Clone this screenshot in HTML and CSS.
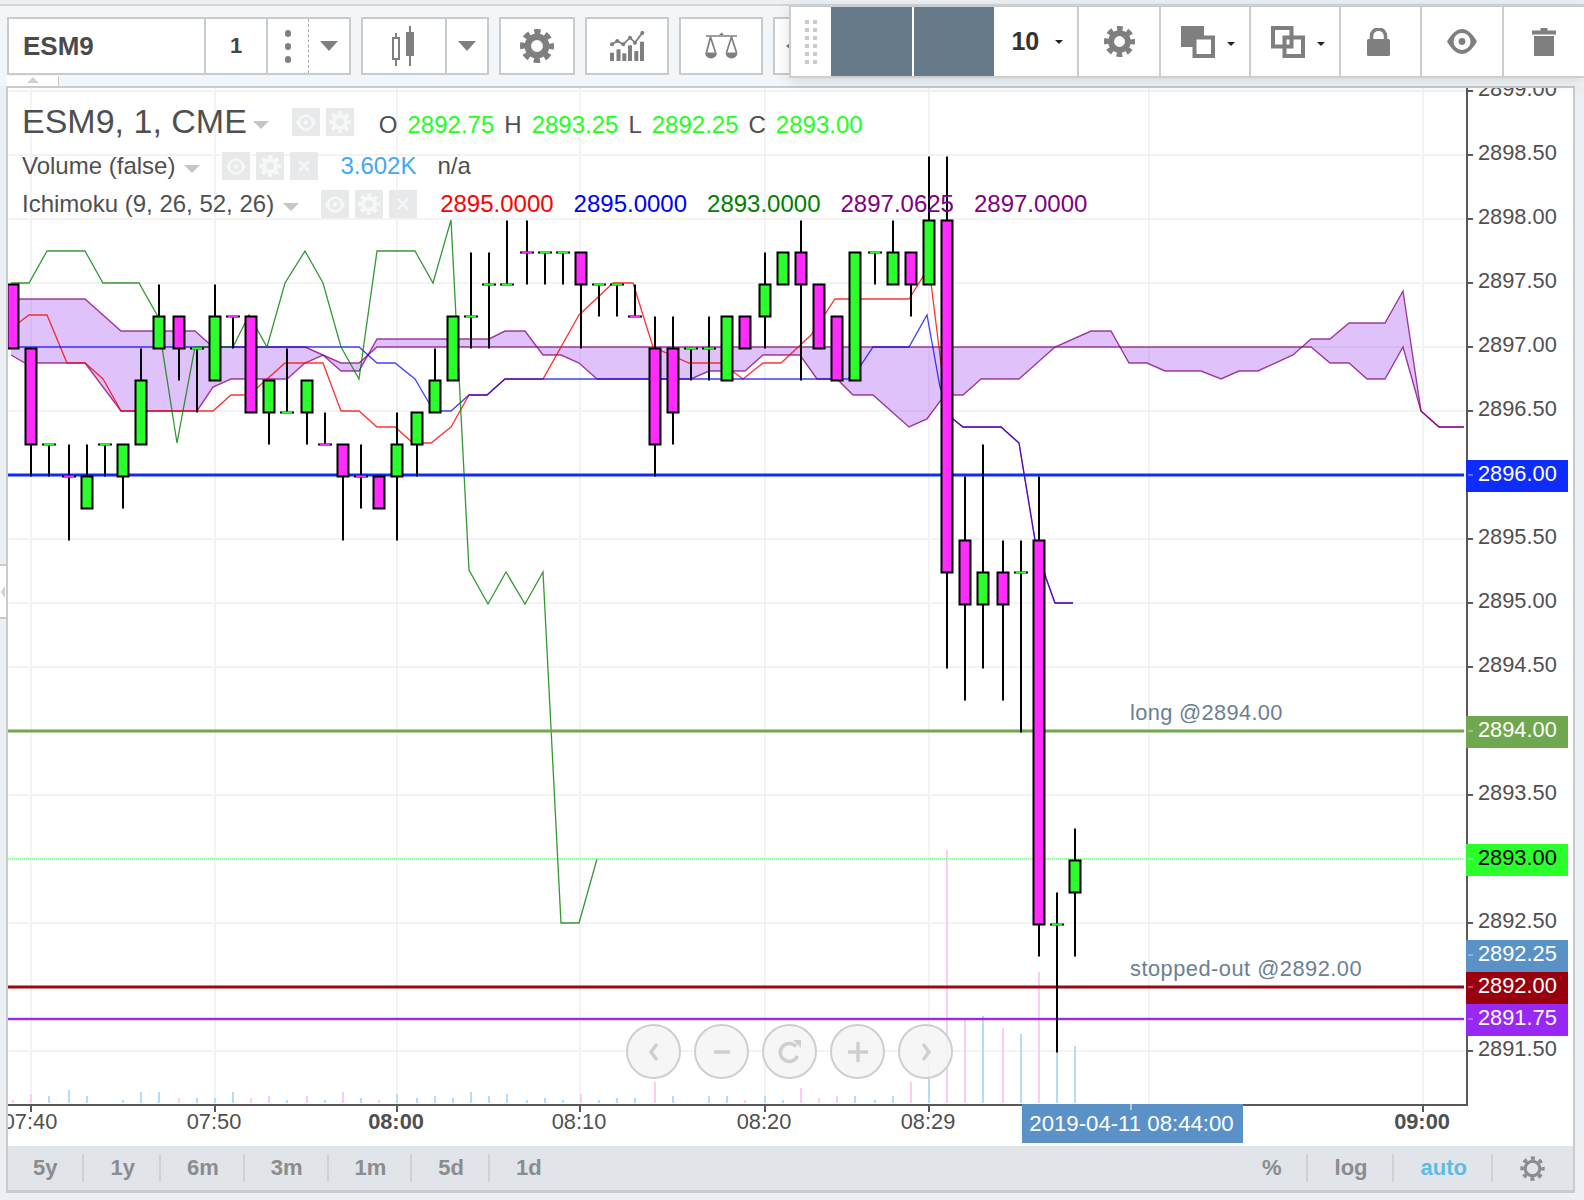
FILE: index.html
```html
<!DOCTYPE html>
<html lang="en">

<head>
    <meta charset="UTF-8" />
    <title>ESM9 chart</title>
    <link rel="stylesheet" href="styles.css">
</head>

<body>
    <!-- shared icons -->
    <svg class="icon-defs" width="0" height="0">
        <symbol id="gear" viewBox="0 0 24 24">
            <circle cx="12" cy="12" r="6.5" fill="none" stroke="currentColor" stroke-width="4.6" />
            <circle cx="12" cy="12" r="10" fill="none" stroke="currentColor" stroke-width="4" stroke-dasharray="4.4 3.45" stroke-dashoffset="2.2" />
        </symbol>
        <symbol id="gear-thin" viewBox="0 0 24 24">
            <circle cx="12" cy="12" r="7" fill="none" stroke="currentColor" stroke-width="3" />
            <circle cx="12" cy="12" r="10" fill="none" stroke="currentColor" stroke-width="3.4" stroke-dasharray="3.93 3.93" stroke-dashoffset="1.96" />
        </symbol>
        <symbol id="eye" viewBox="0 0 30 25">
            <path fill="currentColor" fill-rule="evenodd" d="M0 12.5C5 4 10 0 15 0s10 4 15 12.5C25 21 20 25 15 25S5 21 0 12.5ZM15 4a8.5 8.5 0 1 0 0 17 8.5 8.5 0 0 0 0-17Z" />
            <circle cx="15" cy="12.5" r="3.4" fill="currentColor" />
        </symbol>
        <symbol id="cross" viewBox="0 0 14 14">
            <path d="M2 2l10 10M12 2L2 12" stroke="currentColor" stroke-width="2.4" fill="none" />
        </symbol>
    </svg>

    <div class="topbar">
        <div class="tool-row">
            <div class="tool-group">
                <div class="tool-cell symbol-cell">ESM9</div>
                <div class="tool-cell interval-cell">1</div>
                <div class="tool-cell dots-cell"><i></i><i></i><i></i></div>
                <div class="tool-cell caret-cell"><span class="caret"></span></div>
            </div>
            <div class="tool-group">
                <div class="tool-cell type-cell">
                    <svg width="24" height="40" viewBox="0 0 24 40">
                        <path d="M4 7v33" stroke="#7f7f7f" stroke-width="2" />
                        <rect x="1" y="12" width="6" height="21" fill="#fff" stroke="#7f7f7f" stroke-width="2" />
                        <path d="M18 0v40" stroke="#7f7f7f" stroke-width="2" />
                        <rect x="14" y="6" width="8" height="24" fill="#7f7f7f" />
                    </svg>
                </div>
                <div class="tool-cell caret-cell"><span class="caret"></span></div>
            </div>
            <div class="tool-group gear-group">
                <svg class="tool-gear" width="34" height="34"><use href="#gear" /></svg>
            </div>
            <div class="tool-group icon-group">
                <svg width="35" height="30" viewBox="0 0 35 30">
                    <g fill="#7f7f7f">
                        <rect x="0" y="21.7" width="4" height="8.3" />
                        <rect x="6.5" y="18.3" width="4" height="11.7" />
                        <rect x="12.3" y="22.3" width="4" height="7.7" />
                        <rect x="18" y="14.3" width="4" height="15.7" />
                        <rect x="24.3" y="20" width="4" height="10" />
                        <rect x="30" y="10.7" width="4" height="19.3" />
                        <circle cx="2" cy="13.3" r="2" />
                        <circle cx="7.3" cy="10" r="2" />
                        <circle cx="13.3" cy="13.3" r="2" />
                        <circle cx="20" cy="6.7" r="2" />
                        <circle cx="25" cy="11.7" r="2" />
                        <circle cx="32.3" cy="1.9" r="2" />
                    </g>
                    <path d="M2 13.3L7.3 10l6 3.3L20 6.7l5 5 7.3-9.8" fill="none" stroke="#7f7f7f" stroke-width="1.8" />
                </svg>
            </div>
            <div class="tool-group icon-group">
                <svg width="33" height="28" viewBox="0 0 33 28">
                    <path d="M1 4h31M5.5 5L1.5 20.5M5.5 5l5 15.5M26.5 5l-5 15.5M26.5 5l5 15.5" fill="none" stroke="#7f7f7f" stroke-width="1.7" />
                    <path d="M14 3l2.5-2.5L19 3z" fill="#7f7f7f" />
                    <path d="M0 20.5h12a6 6 0 0 1-12 0ZM20.5 20.5h12a6 6 0 0 1-12 0Z" fill="#7f7f7f" />
                </svg>
            </div>
            <div class="tool-group more-group"><span class="more-arrow"></span></div>
        </div>
        <div class="collapse-tab"><span></span></div>
    </div>

    <div class="side-handle"><span></span></div>

    <div class="draw-toolbar">
        <div class="draw-handle">
            <i></i><i></i><i></i><i></i><i></i><i></i><i></i><i></i><i></i><i></i><i></i><i></i>
        </div>
        <div class="swatch"></div>
        <div class="swatch swatch-gap"></div>
        <div class="draw-cell size-cell">10<span class="mini-caret"></span></div>
        <div class="draw-cell">
            <svg class="draw-gear" width="31" height="31"><use href="#gear" /></svg>
        </div>
        <div class="draw-cell wide">
            <svg width="34" height="32" viewBox="0 0 34 32">
                <rect x="0" y="0" width="23" height="21" fill="#7f7f7f" />
                <rect x="13.5" y="11.5" width="18.5" height="18.5" fill="#fff" stroke="#7f7f7f" stroke-width="4" />
            </svg>
            <span class="mini-caret"></span>
        </div>
        <div class="draw-cell wide">
            <svg width="34" height="32" viewBox="0 0 34 32">
                <rect x="2" y="2" width="18.5" height="18.5" fill="none" stroke="#7f7f7f" stroke-width="4" />
                <rect x="13.5" y="11.5" width="18.5" height="18.5" fill="none" stroke="#7f7f7f" stroke-width="4" />
            </svg>
            <span class="mini-caret"></span>
        </div>
        <div class="draw-cell lock-cell">
            <svg width="23" height="28" viewBox="0 0 23 28">
                <rect x="0" y="11" width="23" height="17" rx="1.5" fill="#7f7f7f" />
                <path d="M4.5 12V8a7 7 0 0 1 14 0v4" fill="none" stroke="#7f7f7f" stroke-width="3.5" />
            </svg>
        </div>
        <div class="draw-cell">
            <svg class="draw-eye" width="30" height="25"><use href="#eye" /></svg>
        </div>
        <div class="draw-cell">
            <svg width="24" height="28" viewBox="0 0 24 28">
                <path d="M0 2.5h8.5V0h7v2.5H24v4H0zM2 8h20v20H2z" fill="#7f7f7f" />
            </svg>
        </div>
    </div>

    <div class="chart-panel">
        <div class="chart-row">
            <div class="plot">
                <svg id="chart" class="chart-svg" width="1458" height="1016" viewBox="8 88 1458 1016"></svg>

                <div class="legend">
                    <div class="legend-row title-row">
                        <span class="legend-title">ESM9, 1, CME</span>
                        <span class="legend-caret"></span>
                        <div class="legend-icons">
                            <span class="legend-icon"><svg width="20" height="17"><use href="#eye" /></svg></span>
                            <span class="legend-icon"><svg width="22" height="22"><use href="#gear" /></svg></span>
                        </div>
                        <div class="ohlc">
                            <span>O</span><span class="up">2892.75</span>
                            <span>H</span><span class="up">2893.25</span>
                            <span>L</span><span class="up">2892.25</span>
                            <span>C</span><span class="up">2893.00</span>
                        </div>
                    </div>
                    <div class="legend-row volume-row">
                        <span>Volume (false)</span>
                        <span class="legend-caret"></span>
                        <div class="legend-icons">
                            <span class="legend-icon"><svg width="20" height="17"><use href="#eye" /></svg></span>
                            <span class="legend-icon"><svg width="22" height="22"><use href="#gear" /></svg></span>
                            <span class="legend-icon"><svg width="14" height="14"><use href="#cross" /></svg></span>
                        </div>
                        <div class="volume-values">
                            <span class="vol-value">3.602K</span><span>n/a</span>
                        </div>
                    </div>
                    <div class="legend-row ichimoku-row">
                        <span>Ichimoku (9, 26, 52, 26)</span>
                        <span class="legend-caret"></span>
                        <div class="legend-icons">
                            <span class="legend-icon"><svg width="20" height="17"><use href="#eye" /></svg></span>
                            <span class="legend-icon"><svg width="22" height="22"><use href="#gear" /></svg></span>
                            <span class="legend-icon"><svg width="14" height="14"><use href="#cross" /></svg></span>
                        </div>
                        <div class="ichimoku-values">
                            <span class="red">2895.0000</span>
                            <span class="blue">2895.0000</span>
                            <span class="green">2893.0000</span>
                            <span class="purple">2897.0625</span>
                            <span class="purple">2897.0000</span>
                        </div>
                    </div>
                </div>

                <div class="note note-long">long @2894.00</div>
                <div class="note note-stop">stopped-out @2892.00</div>

                <div class="nav-buttons">
                    <div class="nav-button">
                        <svg width="16" height="22" viewBox="0 0 16 22"><path d="M11 3L5 11l6 8" /></svg>
                    </div>
                    <div class="nav-button">
                        <svg width="18" height="22" viewBox="0 0 18 22"><path d="M1 11h16" /></svg>
                    </div>
                    <div class="nav-button">
                        <svg width="26" height="26" viewBox="0 0 26 26">
                            <path d="M19 7.5A9 9 0 1 0 20.5 17" />
                            <path class="solid" d="M16 1l8 0v8z" />
                        </svg>
                    </div>
                    <div class="nav-button">
                        <svg width="22" height="22" viewBox="0 0 22 22"><path d="M11 1v20M1 11h20" /></svg>
                    </div>
                    <div class="nav-button">
                        <svg width="16" height="22" viewBox="0 0 16 22"><path d="M5 3l6 8-6 8" /></svg>
                    </div>
                </div>
            </div>
            <div id="price-axis" class="price-axis"></div>
        </div>

        <div id="time-axis" class="time-axis">
            <div class="date-label">2019-04-11 08:44:00<span></span></div>
        </div>

        <div class="range-bar">
            <div class="range-item first">5y</div>
            <div class="range-item">1y</div>
            <div class="range-item">6m</div>
            <div class="range-item">3m</div>
            <div class="range-item">1m</div>
            <div class="range-item">5d</div>
            <div class="range-item last">1d</div>
            <div class="range-right">
                <div class="range-item">%</div>
                <div class="range-item">log</div>
                <div class="range-item auto">auto</div>
                <div class="range-item last gear-item">
                    <svg class="range-gear" width="25" height="25"><use href="#gear-thin" /></svg>
                </div>
            </div>
        </div>
    </div>

    <script src="chart.js"></script>
</body>

</html>
```

FILE: styles.css
```css
* {
    box-sizing: border-box;
}

body {
    font-family: 'Liberation Sans', Arial, sans-serif;
    background: #ecf0f3;
    width: 1584px;
    height: 1200px;
    margin: 0;
    padding-top: 4px;
    position: relative;
    overflow: hidden;
    color: #4f4f4f;
}

.icon-defs {
    position: absolute;
}

/* top toolbar */
.topbar {
    height: 82px;
    background: #f2f6f9;
    border-top: 2px solid #d3d7da;
    padding: 11px 0 0 7px;
}

.tool-row {
    display: flex;
    gap: 10px;
    height: 58px;
}

.tool-group {
    display: flex;
    background: #fff;
    border: 2px solid #c8cbcd;
    align-items: stretch;
}

.tool-cell {
    display: flex;
    align-items: center;
    justify-content: center;
    border-right: 2px solid #c8cbcd;
}

.symbol-cell {
    width: 197px;
    justify-content: flex-start;
    padding-left: 14px;
    font-size: 26px;
    font-weight: bold;
    color: #4a4a4a;
}

.interval-cell {
    width: 62px;
    font-size: 22px;
    font-weight: bold;
    color: #444;
}

.dots-cell {
    width: 41px;
    flex-direction: column;
    gap: 6px;
    border-right: 1px dashed #a8a8a8;
}

.dots-cell i {
    width: 6px;
    height: 7px;
    border-radius: 3px;
    background: #808080;
}

.caret-cell {
    width: 40px;
    border-right: none;
}

.caret {
    width: 0;
    height: 0;
    border-left: 9px solid transparent;
    border-right: 9px solid transparent;
    border-top: 10px solid #7f7f7f;
}

.type-cell {
    width: 84px;
}

.gear-group {
    width: 76px;
    justify-content: center;
    align-items: center;
}

.tool-gear {
    color: #7f7f7f;
}

.icon-group {
    width: 84px;
    justify-content: center;
    align-items: center;
}

.more-group {
    width: 40px;
    align-items: center;
    padding-left: 11px;
}

.more-arrow {
    border-top: 3px solid transparent;
    border-bottom: 3px solid transparent;
    border-right: 4px solid #777;
}

.collapse-tab {
    width: 52px;
    height: 10px;
    margin-top: 1px;
    background: #fff;
    border-right: 1px solid #c8cbcd;
    display: flex;
    justify-content: center;
    padding-top: 1px;
}

.collapse-tab span {
    width: 0;
    height: 0;
    border-left: 6px solid transparent;
    border-right: 6px solid transparent;
    border-bottom: 6px solid #cfd2d4;
}

.side-handle {
    position: absolute;
    left: 0;
    top: 564px;
    width: 6px;
    height: 55px;
    background: #fff;
    border-top: 2px solid #c8cbcd;
    border-bottom: 2px solid #c8cbcd;
    display: flex;
    align-items: center;
}

.side-handle span {
    border-top: 6px solid transparent;
    border-bottom: 6px solid transparent;
    border-right: 4px solid #cfcfcf;
    margin-left: 1px;
}

/* floating drawing toolbar */
.draw-toolbar {
    position: absolute;
    left: 789px;
    top: 5px;
    right: 0;
    height: 73px;
    display: flex;
    background: #fff;
    border: 2px solid #cbcdcf;
    border-right: none;
    box-shadow: 0 4px 14px rgba(0, 0, 0, 0.12);
    z-index: 5;
}

.draw-handle {
    width: 40px;
    display: grid;
    grid-template-columns: 4px 4px;
    grid-auto-rows: 4px;
    gap: 4px 4px;
    align-content: center;
    justify-content: center;
}

.draw-handle i {
    background: #cbcbcb;
}

.swatch {
    width: 81px;
    background: #667a89;
}

.swatch-gap {
    margin-left: 2px;
}

.draw-cell {
    width: 82px;
    display: flex;
    align-items: center;
    justify-content: center;
    gap: 12px;
    border-left: 2px solid #cbcdcf;
}

.draw-cell.size-cell {
    border-left: none;
    width: 83px;
    gap: 16px;
    padding-left: 3px;
    font-size: 25px;
    font-weight: bold;
    color: #333;
}

.draw-cell.wide {
    width: 90px;
    padding-left: 6px;
}

.lock-cell {
    padding-right: 4px;
}

.mini-caret {
    width: 0;
    height: 0;
    border-left: 4px solid transparent;
    border-right: 4px solid transparent;
    border-top: 4px solid #222;
}

.wide .mini-caret {
    margin-top: 4px;
}

.draw-gear,
.draw-eye {
    color: #7f7f7f;
}

/* chart */
.chart-panel {
    width: 1569px;
    margin-left: 6px;
    border: 2px solid #c8cbcf;
    border-bottom-width: 3px;
    background: #fff;
}

.chart-row {
    display: flex;
    height: 1018px;
}

.plot {
    width: 1460px;
    height: 1018px;
    position: relative;
    border-right: 2px solid #585858;
    border-bottom: 2px solid #585858;
}

.chart-svg {
    display: block;
}

.legend {
    position: absolute;
    left: 14px;
    top: 20px;
    font-size: 24px;
}

.legend-row {
    display: flex;
    align-items: baseline;
    height: 28px;
    white-space: nowrap;
}

.volume-row {
    margin-top: 16px;
}

.ichimoku-row {
    margin-top: 10px;
}

.legend-title {
    font-size: 34px;
    line-height: 26px;
}

.legend-caret {
    align-self: center;
    width: 0;
    height: 0;
    margin-left: 9px;
    margin-top: 5px;
    border-left: 8px solid transparent;
    border-right: 8px solid transparent;
    border-top: 8px solid #c6c6c6;
}

.legend-icons {
    align-self: center;
    display: flex;
    gap: 6px;
    margin-left: 22px;
}

.title-row .legend-caret {
    margin-left: 6px;
}

.title-row .legend-icons {
    margin-left: 23px;
}

.legend-icon {
    width: 28px;
    height: 28px;
    background: #e7e9ea;
    color: #f6f7f7;
    display: flex;
    align-items: center;
    justify-content: center;
}

.ohlc {
    display: flex;
    gap: 10px;
    margin-left: 25px;
}

.up {
    color: #22ff22;
}

.volume-values {
    display: flex;
    gap: 21px;
    margin-left: 22px;
}

.vol-value {
    color: #43a8f5;
}

.ichimoku-values {
    display: flex;
    gap: 20px;
    margin-left: 23px;
}

.red {
    color: #ff0000;
}

.blue {
    color: #0000ff;
}

.green {
    color: #008000;
}

.purple {
    color: #800080;
}

.note {
    position: absolute;
    font-size: 21.8px;
    line-height: 28px;
    color: #6b8092;
    white-space: nowrap;
}

.note-long {
    left: 1122px;
    top: 611px;
    letter-spacing: 0.35px;
}

.note-stop {
    left: 1122px;
    top: 867px;
    letter-spacing: 0.5px;
}

.nav-buttons {
    position: absolute;
    left: 618px;
    top: 936px;
    display: flex;
    gap: 13px;
}

.nav-button {
    width: 55px;
    height: 55px;
    border-radius: 50%;
    border: 2px solid #cfcfcf;
    background: rgba(245, 245, 245, 0.85);
    display: flex;
    align-items: center;
    justify-content: center;
}

.nav-button path {
    fill: none;
    stroke: #cfcfcf;
    stroke-width: 3.5;
}

.nav-button path.solid {
    fill: #cfcfcf;
    stroke: none;
}

/* axes */
.price-axis {
    width: 105px;
    height: 1018px;
    position: relative;
    font-size: 21.8px;
    clip-path: inset(0 0 0 -4px);
}

.price-label {
    position: absolute;
    left: 10px;
    line-height: 32px;
}

.price-tick {
    position: absolute;
    left: 0;
    width: 5px;
    height: 2px;
    background: #585858;
}

.price-box {
    position: absolute;
    left: -2px;
    width: 102px;
    height: 32px;
    padding-left: 12px;
    line-height: 28px;
    color: #fff;
}

.price-box::before {
    content: "";
    position: absolute;
    left: 2px;
    top: 14px;
    width: 5px;
    height: 2px;
    background: rgba(255, 255, 255, 0.3);
}

.time-axis {
    height: 40px;
    position: relative;
    font-size: 21.8px;
    clip-path: inset(-4px 0 0 0);
}

.time-label {
    position: absolute;
    top: 0;
    line-height: 32px;
    transform: translateX(-50%);
}

.time-label.bold {
    font-weight: bold;
}

.time-tick {
    position: absolute;
    top: 0;
    width: 2px;
    height: 6px;
    background: #585858;
}

.date-label {
    position: absolute;
    left: 1014px;
    top: -2px;
    width: 221px;
    height: 39px;
    padding-right: 2px;
    line-height: 39px;
    text-align: center;
    font-size: 22.2px;
    background: #5a92c8;
    color: #fff;
    z-index: 2;
}

.date-label span {
    position: absolute;
    left: 108px;
    top: 0;
    width: 2px;
    height: 6px;
    background: rgba(255, 255, 255, 0.5);
}

.range-bar {
    height: 44px;
    background: #e1e4e8;
    display: flex;
    align-items: center;
    font-size: 22px;
    font-weight: bold;
    color: #8a8c8f;
}

.range-item {
    height: 28px;
    line-height: 26px;
    padding: 0 24px 0 26px;
    border-right: 2px solid #cfd2d6;
    display: flex;
    align-items: center;
}

.range-item.first {
    padding: 0 25px;
}

.range-item.last {
    border-right: none;
}

.range-right .range-item {
    padding-left: 27px;
}

.range-right .range-item.gear-item {
    padding-right: 28px;
}

.range-item.auto {
    color: #5bbde4;
}

.range-right {
    display: flex;
    margin-left: auto;
    align-items: center;
}

.range-gear {
    color: #8a8c8f;
}
```

FILE: chart.js
```js
const svg = document.getElementById('chart');
const priceAxis = document.getElementById('price-axis');
const timeAxis = document.getElementById('time-axis');

// 0.25 of a point is 32px, 2896.00 sits at y = 475
function priceY(price) {
    return 475 + (2896 - price) * 128;
}

// candle edges sit a little under the grid line
function candleY(price) {
    return 476.5 + (2896 - price) * 128;
}

// [x, colour, body top, body bottom, wick high, wick low]
const candles = [
    [13, 'm', 2897.5, 2897],
    [31, 'm', 2897, 2896.25, 2897, 2896],
    [49, 'g', 2896.25, 2896.25, 2896.25, 2896],
    [69, 'm', 2896, 2896, 2896.25, 2895.5],
    [87, 'g', 2896, 2895.75, 2896.25, 2895.75],
    [105, 'g', 2896.25, 2896.25, 2896.25, 2896],
    [123, 'g', 2896.25, 2896, 2896.25, 2895.75],
    [141, 'g', 2896.75, 2896.25, 2897, 2896.25],
    [159, 'g', 2897.25, 2897, 2897.5, 2897],
    [179, 'm', 2897.25, 2897, 2897.25, 2896.75],
    [197, 'g', 2897, 2897, 2897, 2896.5],
    [215, 'g', 2897.25, 2896.75, 2897.5, 2896.75],
    [233, 'm', 2897.25, 2897.25, 2897.25, 2897],
    [251, 'm', 2897.25, 2896.5],
    [269, 'g', 2896.75, 2896.5, 2896.75, 2896.25],
    [287, 'g', 2896.5, 2896.5, 2897, 2896.5],
    [307, 'g', 2896.75, 2896.5, 2896.75, 2896.25],
    [325, 'm', 2896.25, 2896.25, 2896.5, 2896.25],
    [343, 'm', 2896.25, 2896, 2896.25, 2895.5],
    [361, 'm', 2896, 2896, 2896.25, 2895.75],
    [379, 'm', 2896, 2895.75],
    [397, 'g', 2896.25, 2896, 2896.5, 2895.5],
    [417, 'g', 2896.5, 2896.25, 2896.5, 2896],
    [435, 'g', 2896.75, 2896.5, 2897, 2896.5],
    [453, 'g', 2897.25, 2896.75],
    [471, 'g', 2897.25, 2897.25, 2897.75, 2897],
    [489, 'g', 2897.5, 2897.5, 2897.75, 2897],
    [507, 'g', 2897.5, 2897.5, 2898, 2897.5],
    [527, 'm', 2897.75, 2897.75, 2898, 2897.5],
    [545, 'g', 2897.75, 2897.75, 2897.75, 2897.5],
    [563, 'g', 2897.75, 2897.75, 2897.75, 2897.5],
    [581, 'm', 2897.75, 2897.5, 2897.75, 2897],
    [599, 'g', 2897.5, 2897.5, 2897.5, 2897.25],
    [617, 'g', 2897.5, 2897.5, 2897.5, 2897.25],
    [635, 'm', 2897.25, 2897.25, 2897.5, 2897.25],
    [655, 'm', 2897, 2896.25, 2897.25, 2896],
    [673, 'm', 2897, 2896.5, 2897.25, 2896.25],
    [691, 'g', 2897, 2897, 2897, 2896.75],
    [709, 'g', 2897, 2897, 2897.25, 2896.75],
    [727, 'g', 2897.25, 2896.75],
    [745, 'm', 2897.25, 2897],
    [765, 'g', 2897.5, 2897.25, 2897.75, 2897],
    [783, 'g', 2897.75, 2897.5],
    [801, 'm', 2897.75, 2897.5, 2898, 2896.75],
    [819, 'm', 2897.5, 2897],
    [837, 'm', 2897.25, 2896.75],
    [855, 'g', 2897.75, 2896.75],
    [875, 'g', 2897.75, 2897.75, 2897.75, 2897.5],
    [893, 'g', 2897.75, 2897.5, 2898, 2897.5],
    [911, 'm', 2897.75, 2897.5, 2897.75, 2897.25],
    [929, 'g', 2898, 2897.5, 2898.5, 2897.5],
    [947, 'm', 2898, 2895.25, 2898.5, 2894.5],
    [965, 'm', 2895.5, 2895, 2896, 2894.25],
    [983, 'g', 2895.25, 2895, 2896.25, 2894.5],
    [1003, 'm', 2895.25, 2895, 2895.5, 2894.25],
    [1021, 'g', 2895.25, 2895.25, 2895.5, 2894],
    [1039, 'm', 2895.5, 2892.5, 2896, 2892.25],
    [1057, 'g', 2892.5, 2892.5, 2892.75, 2891.5],
    [1075, 'g', 2893, 2892.75, 2893.25, 2892.25]
];

// same order as candles, height in px, negative = pink
const volumes = [
    -3, -9, 7, 13, 7, 0, 3, 11, 11, -5, 5, 5, 11, -5, -7, 3, -7, 3, -11, 5,
    -3, 9, 5, 7, 5, 11, 7, 9, 3, 5, 3, -9, 3, 5, 5, -21, 7, 0, 7, 7,
    -3, 7, 3, -15, -5, -7, 7, 3, 7, -21, 40, -253, -85, 87, -75, 69, -131, 51, 57
];

// ichimoku lines as page pixels
const cloudA = [
    [11, 299], [85, 299], [121, 331], [195, 331], [213, 347], [305, 347], [323, 355], [341, 363],
    [359, 363], [377, 347], [1311, 347], [1330, 363], [1349, 363], [1367, 379], [1385, 379],
    [1403, 347], [1421, 411], [1439, 427], [1464, 427]
];
const cloudB = [
    [11, 355], [25, 363], [85, 363], [121, 411], [197, 411], [213, 387], [231, 379], [287, 379],
    [305, 363], [323, 355], [341, 371], [359, 371], [377, 339], [489, 339], [505, 331], [525, 331],
    [543, 355], [561, 355], [579, 363], [597, 379], [691, 379], [709, 371], [745, 371], [763, 355],
    [800, 355], [817, 379], [837, 379], [853, 395], [873, 395], [909, 427], [927, 419], [941, 400],
    [953, 395], [963, 395], [981, 379], [1019, 379], [1055, 347], [1091, 331], [1111, 331],
    [1129, 363], [1147, 363], [1165, 371], [1201, 371], [1221, 379], [1239, 371], [1258, 371],
    [1293, 355], [1311, 339], [1330, 339], [1349, 323], [1385, 323], [1403, 291], [1421, 411],
    [1439, 427], [1464, 427]
];
const sharedTail = [
    [953, 419], [963, 427], [1001, 427], [1019, 443], [1035, 540], [1046, 578], [1055, 603], [1073, 603]
];
const redLine = [
    [13, 327], [29, 315], [47, 315], [67, 363], [85, 363], [103, 379], [121, 411], [213, 411],
    [231, 395], [249, 395], [285, 363], [323, 363], [341, 411], [359, 411], [377, 427], [395, 427],
    [413, 443], [431, 443], [451, 427], [469, 395], [487, 395], [505, 379], [543, 379], [579, 315],
    [613, 283], [633, 283], [653, 347], [689, 363], [721, 363], [743, 379], [763, 363], [781, 363],
    [811, 335], [835, 299], [909, 299], [929, 267], [943, 380]
].concat(sharedTail);
const blueLine = [
    [13, 347], [359, 347], [377, 363], [395, 363], [415, 379], [429, 403], [435, 411], [451, 411],
    [469, 395], [487, 395], [505, 379], [848, 379], [861, 365], [873, 347], [909, 347], [927, 315],
    [940, 387]
].concat(sharedTail);
const greenLine = [
    [11, 283], [29, 283], [47, 251], [85, 251], [103, 283], [139, 283], [157, 315], [177, 443],
    [195, 347], [233, 347], [249, 315], [267, 347], [285, 283], [305, 251], [323, 283], [341, 347],
    [359, 379], [377, 251], [415, 251], [433, 283], [451, 220], [469, 570], [488, 604], [506, 572],
    [525, 604], [543, 572], [561, 923], [579, 923], [597, 859]
];

const gridPrices = [];
for (let p = 2899; p >= 2891.5; p -= 0.5) {
    gridPrices.push(p);
}
const times = [
    { x: 31, label: '07:40' },
    { x: 215, label: '07:50' },
    { x: 397, label: '08:00', bold: true },
    { x: 580, label: '08:10' },
    { x: 765, label: '08:20' },
    { x: 929, label: '08:29' },
    { x: 1149 },
    { x: 1423, label: '09:00', bold: true }
];
const priceLines = [
    { y: 475, color: '#0f2cff', width: 3 },
    { y: 731, color: '#6fa84f', width: 3 },
    { y: 987, color: '#970a12', width: 3 },
    { y: 1019, color: '#9a28f5', width: 2.4 }
];
const priceBoxes = [
    { text: '2896.00', y: 475, bg: '#0f2cff' },
    { text: '2894.00', y: 731, bg: '#6fa84f' },
    { text: '2893.00', y: 859, bg: '#2bff2b', dark: true },
    { text: '2892.25', y: 955, bg: '#5a92c8' },
    { text: '2892.00', y: 987, bg: '#97000c' },
    { text: '2891.75', y: 1019, bg: '#9a28f5' }
];

function points(list) {
    return list.map(p => p[0] + ',' + p[1]).join(' ');
}

function polyline(list, color, width) {
    return `<polyline points="${points(list)}" fill="none" stroke="${color}" stroke-width="${width}" />`;
}

function drawCandle(c) {
    const fill = c[1] === 'g' ? '#2bff2b' : '#ff2bff';
    const top = candleY(c[2]);
    const low = candleY(c[3]);
    let out = '';
    if (c[4] !== undefined) {
        const hi = candleY(c[4]);
        const lo = candleY(c[5]);
        out += `<rect x="${c[0] - 1}" y="${hi}" width="2" height="${lo - hi}" fill="#000" />`;
    }
    if (top === low) {
        // open equals close: short dash
        out += `<rect x="${c[0] - 7}" y="${top - 1}" width="14" height="2" fill="#000" />`;
        out += `<rect x="${c[0] - 5}" y="${top - 1}" width="10" height="2" fill="${fill}" />`;
    } else {
        out += `<rect x="${c[0] - 5.5}" y="${top}" width="11" height="${low - top}" fill="${fill}" stroke="#000" stroke-width="2" />`;
    }
    return out;
}

let html = '';

gridPrices.forEach(p => {
    html += `<rect x="9" y="${priceY(p) - 1}" width="1457" height="2" fill="#f3f3f3" />`;
});
times.forEach(t => {
    html += `<rect x="${t.x - 1}" y="88" width="2" height="1016" fill="#f3f3f3" />`;
});

candles.forEach((c, i) => {
    const h = volumes[i];
    if (h !== 0) {
        const color = h > 0 ? '#b5dcf9' : '#fcccf2';
        html += `<rect x="${c[0] - 1}" y="${1103 - Math.abs(h)}" width="2" height="${Math.abs(h)}" fill="${color}" />`;
    }
});

html += `<polygon points="${points(cloudA.concat(cloudB.slice().reverse()))}" fill="#aa55f5" fill-opacity="0.36" />`;
html += polyline(cloudA, 'rgba(128, 0, 128, 0.75)', 1.4);
html += polyline(cloudB, 'rgba(128, 0, 128, 0.75)', 1.4);
html += polyline(redLine, 'rgba(255, 0, 0, 0.8)', 1.3);
html += polyline(blueLine, 'rgba(0, 0, 255, 0.75)', 1.3);
html += polyline(greenLine, 'rgba(0, 128, 0, 0.8)', 1.3);

priceLines.forEach(l => {
    html += `<rect x="8" y="${l.y - l.width / 2}" width="1456" height="${l.width}" fill="${l.color}" />`;
});
html += '<line x1="8" y1="859" x2="1464" y2="859" stroke="#3cf53c" stroke-width="1" stroke-dasharray="1 1" />';

candles.forEach(c => {
    html += drawCandle(c);
});

svg.innerHTML = html;

// price axis, axis element starts at page y = 88
gridPrices.forEach(p => {
    const y = priceY(p);
    const tick = document.createElement('div');
    tick.className = 'price-tick';
    tick.style.top = (y - 89) + 'px';
    priceAxis.appendChild(tick);
    if (priceBoxes.some(b => b.text === p.toFixed(2))) {
        return;
    }
    const label = document.createElement('div');
    label.className = 'price-label';
    label.style.top = (y - 106) + 'px';
    label.innerText = p.toFixed(2);
    priceAxis.appendChild(label);
});

priceBoxes.forEach(b => {
    const box = document.createElement('div');
    box.className = 'price-box';
    box.style.top = (b.y - 103) + 'px';
    box.style.background = b.bg;
    if (b.dark) {
        box.style.color = '#000';
    }
    box.innerText = b.text;
    priceAxis.appendChild(box);
});

// time axis, axis element starts at page x = 8
times.forEach(t => {
    const tick = document.createElement('div');
    tick.className = 'time-tick';
    tick.style.left = (t.x - 9) + 'px';
    timeAxis.appendChild(tick);
    if (!t.label) {
        return;
    }
    const label = document.createElement('div');
    label.className = t.bold ? 'time-label bold' : 'time-label';
    label.style.left = (t.x - 9) + 'px';
    label.innerText = t.label;
    timeAxis.appendChild(label);
});
```
